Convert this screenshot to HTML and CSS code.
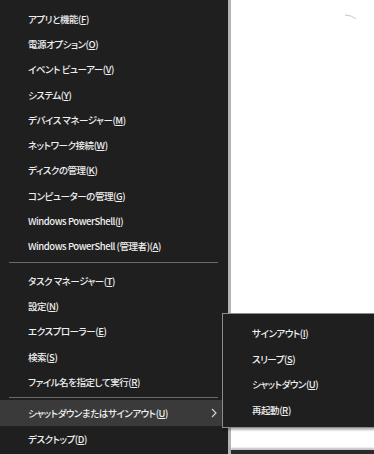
FILE: index.html
```html
<!DOCTYPE html>
<html lang="ja">
<head>
    <meta charset="UTF-8">
    <meta name="viewport" content="width=device-width, initial-scale=1.0">
    <title>クイック リンク メニュー</title>
    <link rel="stylesheet" href="styles.css">
</head>
<body>
    <div class="screen">
        <nav class="menu">
            <ul class="menu-group">
                <li class="menu-item">アプリと機能(<u>F</u>)</li>
                <li class="menu-item">電源オプション(<u>O</u>)</li>
                <li class="menu-item">イベント ビューアー(<u>V</u>)</li>
                <li class="menu-item">システム(<u>Y</u>)</li>
                <li class="menu-item">デバイス マネージャー(<u>M</u>)</li>
                <li class="menu-item">ネットワーク接続(<u>W</u>)</li>
                <li class="menu-item">ディスクの管理(<u>K</u>)</li>
                <li class="menu-item">コンピューターの管理(<u>G</u>)</li>
                <li class="menu-item">Windows PowerShell(<u>I</u>)</li>
                <li class="menu-item">Windows PowerShell (管理者)(<u>A</u>)</li>
            </ul>
            <div class="separator"></div>
            <ul class="menu-group">
                <li class="menu-item">タスク マネージャー(<u>T</u>)</li>
                <li class="menu-item">設定(<u>N</u>)</li>
                <li class="menu-item">エクスプローラー(<u>E</u>)</li>
                <li class="menu-item">検索(<u>S</u>)</li>
                <li class="menu-item">ファイル名を指定して実行(<u>R</u>)</li>
            </ul>
            <div class="separator tight"></div>
            <ul class="menu-group">
                <li class="menu-item active">
                    <span>シャットダウンまたはサインアウト(<u>U</u>)</span>
                    <svg class="chevron" width="6" height="10" viewBox="0 0 6 10">
                        <path d="M1 1 L5 5 L1 9" fill="none" stroke="#cfcfcf" stroke-width="1.2"/>
                    </svg>
                </li>
                <li class="menu-item">デスクトップ(<u>D</u>)</li>
            </ul>
        </nav>

        <div class="desktop">
            <svg class="mark" width="14" height="8" viewBox="0 0 14 8">
                <path d="M1 1 L7 2 L12 5" fill="none" stroke="#c8c8c8" stroke-width="1"/>
            </svg>
            <div class="taskbar-edge"></div>
        </div>

        <ul class="submenu">
            <li class="menu-item">サインアウト(<u>I</u>)</li>
            <li class="menu-item">スリープ(<u>S</u>)</li>
            <li class="menu-item">シャットダウン(<u>U</u>)</li>
            <li class="menu-item">再起動(<u>R</u>)</li>
        </ul>
    </div>
</body>
</html>
```

FILE: styles.css
```css
* {
    margin: 0;
    padding: 0;
    box-sizing: border-box;
}

body {
    font-family: "Noto Sans CJK JP", "Noto Sans", sans-serif;
    background: #ffffff;
    width: 374px;
    height: 454px;
    overflow: hidden;
}

.screen {
    position: relative;
    display: flex;
    height: 454px;
}

.menu {
    width: 231px;
    height: 454px;
    background: #1f1f1f;
    padding-top: 6px;
    border-right: 3px solid #b4b4b4;
    flex: 0 0 auto;
}

.menu-group {
    list-style: none;
}

.menu-item {
    height: 25.3px;
    padding-left: 28px;
    display: flex;
    align-items: center;
    color: #efefef;
    font-size: 9.5px;
    font-weight: 500;
    font-feature-settings: "palt";
    letter-spacing: -0.45px;
    white-space: nowrap;
}

.menu-item u {
    text-underline-offset: 1px;
}

.menu-item.active {
    background: #3a3a3a;
    justify-content: space-between;
    padding-right: 11px;
    height: 26px;
}

.separator {
    height: 1px;
    margin: 3px 10px 5px 9px;
    background: #6a6a6a;
}

.separator.tight {
    margin-bottom: 2px;
}

.desktop {
    position: relative;
    flex: 1;
    height: 454px;
}

.mark {
    position: absolute;
    left: 113px;
    top: 14px;
}

.taskbar-edge {
    position: absolute;
    left: 0;
    right: 0;
    bottom: 0;
    height: 4px;
    background: #2a2a2a;
    box-shadow: 0 -2px 2px rgba(0, 0, 0, 0.25);
}

.submenu {
    position: absolute;
    left: 222px;
    top: 313px;
    width: 160px;
    height: 115px;
    list-style: none;
    background: #1f1f1f;
    border: 1px solid #8c8c8c;
    padding-top: 6px;
    box-shadow: 1px 2px 2px rgba(0, 0, 0, 0.3);
}

.submenu .menu-item {
    height: 25.7px;
    padding-left: 29px;
}
```
